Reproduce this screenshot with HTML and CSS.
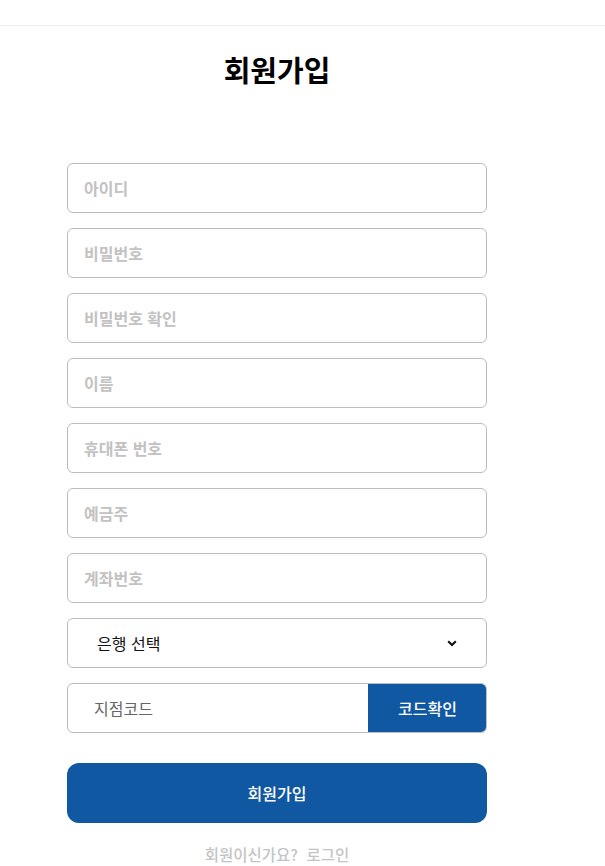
FILE: index.html
```html
<!DOCTYPE html>
<html lang="ko">
<head>
<meta charset="utf-8">
<link rel="stylesheet" href="styles.css">
</head>
<body>
<header class="topbar"></header>
<main class="page">
  <h1 class="title">회원가입</h1>
  <form class="form">
    <input class="field" type="text" placeholder="아이디">
    <input class="field" type="password" placeholder="비밀번호">
    <input class="field" type="password" placeholder="비밀번호 확인">
    <input class="field" type="text" placeholder="이름">
    <input class="field" type="text" placeholder="휴대폰 번호">
    <input class="field" type="text" placeholder="예금주">
    <input class="field" type="text" placeholder="계좌번호">
    <div class="select">
      <span class="select-label">은행 선택</span>
      <svg class="chevron" width="10" height="7" viewBox="0 0 10 7"><path d="M1.2 1.3 L5 5 L8.8 1.3" fill="none" stroke="#111" stroke-width="2.2"/></svg>
    </div>
    <div class="code-row">
      <span class="code-input">지점코드</span>
      <button type="button" class="code-btn">코드확인</button>
    </div>
    <button type="button" class="submit">회원가입</button>
    <p class="login-link">회원이신가요?&nbsp;&nbsp;로그인</p>
  </form>
</main>
</body>
</html>
```
FILE: styles.css
```css
* { box-sizing: border-box; }
body {
  margin: 0;
  background: #fff;
  font-family: "Noto Sans CJK KR", "Noto Sans", sans-serif;
  color: #111;
}
.topbar {
  height: 26px;
  border-bottom: 1px solid #ececec;
}
.page {
  width: 554px;
  display: flex;
  flex-direction: column;
  align-items: center;
}
.title {
  margin: 23px 0 0;
  font-size: 29px;
  line-height: 41px;
  font-weight: 700;
  color: #000;
}
.form {
  width: 420px;
  margin-top: 73px;
  display: flex;
  flex-direction: column;
  gap: 15px;
}
.field {
  height: 50px;
  border: 1px solid #bcbcbc;
  border-radius: 6px;
  padding: 0 16px;
  font-family: inherit;
  font-size: 16px;
  font-weight: 700;
  outline: none;
}
.field::placeholder { color: #c2c2c2; }
.select {
  height: 50px;
  border: 1px solid #bcbcbc;
  border-radius: 6px;
  display: flex;
  align-items: center;
  justify-content: space-between;
  padding: 0 29px 0 29px;
}
.select-label {
  font-size: 16px;
  font-weight: 400;
  color: #111;
}
.code-row {
  height: 50px;
  border: 1px solid #bcbcbc;
  border-radius: 6px;
  overflow: hidden;
  display: flex;
}
.code-input {
  flex: 1;
  display: flex;
  align-items: center;
  padding-left: 26px;
  font-size: 16px;
  color: #666;
}
.code-btn {
  width: 119px;
  margin: -1px -1px -1px 0;
  border: none;
  background: #1158a3;
  color: #fff;
  font-family: inherit;
  font-size: 16px;
  font-weight: 500;
}
.submit {
  margin-top: 15px;
  height: 60px;
  border: none;
  border-radius: 12px;
  background: #1158a3;
  color: #fff;
  font-family: inherit;
  font-size: 16px;
  font-weight: 500;
}
.login-link {
  margin: 5px 0 0;
  text-align: center;
  font-size: 15.5px;
  color: #c4c4c4;
  font-weight: 500;
}
```
